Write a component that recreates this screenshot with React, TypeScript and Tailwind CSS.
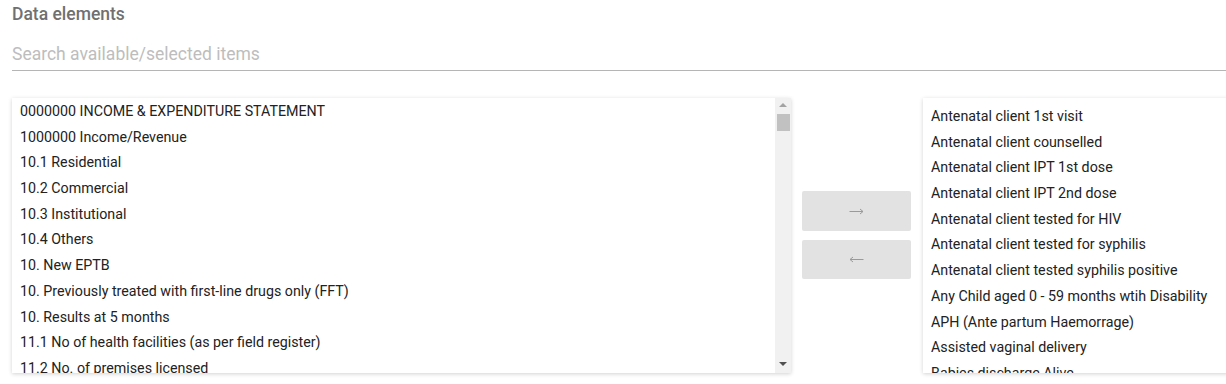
import React from 'react';

const available: string[] = [
    '0000000 INCOME & EXPENDITURE STATEMENT',
    '1000000 Income/Revenue',
    '10.1 Residential',
    '10.2 Commercial',
    '10.3 Institutional',
    '10.4 Others',
    '10. New EPTB',
    '10. Previously treated with first-line drugs only (FFT)',
    '10. Results at 5 months',
    '11.1 No of health facilities (as per field register)',
    '11.2 No. of premises licensed',
];

const selected: string[] = [
    'Antenatal client 1st visit',
    'Antenatal client counselled',
    'Antenatal client IPT 1st dose',
    'Antenatal client IPT 2nd dose',
    'Antenatal client tested for HIV',
    'Antenatal client tested for syphilis',
    'Antenatal client tested syphilis positive',
    'Any Child aged 0 - 59 months wtih Disability',
    'APH (Ante partum Haemorrage)',
    'Assisted vaginal delivery',
    'Babies discharge Alive',
];

const font = { fontFamily: 'Roboto, "Liberation Sans", sans-serif' };

const ListBox = ({ items, scrollbar, offset }: { items: string[]; scrollbar?: boolean; offset: string }) => (
    <div className="relative h-[275px] overflow-hidden bg-white shadow-[0_1px_4px_rgba(0,0,0,0.18)] flex">
        <ul className={`flex-1 ${offset}`}>
            {items.map((item) => (
                <li key={item} className="h-[25.7px] leading-[25.7px] px-2 text-[14.25px] text-[#222] whitespace-nowrap">
                    {item}
                </li>
            ))}
        </ul>
        {scrollbar && (
            <div className="w-[16px] shrink-0 bg-[#f1f1f1] flex flex-col items-center">
                <div className="mt-[5px] w-0 h-0 border-l-[4px] border-r-[4px] border-b-[4px] border-l-transparent border-r-transparent border-b-[#a3a3a3]" />
                <div className="mt-[7px] w-[13px] h-[17px] bg-[#c1c1c1]" />
                <div className="flex-1" />
                <div className="mb-[7px] w-0 h-0 border-l-[4px] border-r-[4px] border-t-[4px] border-l-transparent border-r-transparent border-t-[#505050]" />
            </div>
        )}
    </div>
);

const Arrow = ({ dir }: { dir: 'right' | 'left' }) => (
    <svg width="15" height="7" viewBox="0 0 15 7" className={dir === 'left' ? 'rotate-180' : ''}>
        <path d="M0.5 3.5H14M11 1L14 3.5L11 6" fill="none" stroke="#9a9a9a" strokeWidth="1" />
    </svg>
);

export default function App() {
    return (
        <div className="w-[1226px] h-[384px] overflow-hidden bg-white" style={font}>
            <div className="pl-[12px] pt-[3px]">
                <div className="text-[17.5px] font-medium text-[#707070] leading-[22px]">Data elements</div>
                <div className="mt-[16px] h-[30px] border-b border-[#b5b5b5] flex items-center">
                    <span className="text-[17.5px] text-[#bdbdbd] -mt-[2px]">Search available/selected items</span>
                </div>
            </div>

            <div className="flex mt-[27px] pl-[12px] w-[1600px]">
                <div className="w-[779px] shrink-0">
                    <ListBox items={available} scrollbar offset="pt-[1px]" />
                </div>
                <div className="w-[109px] shrink-0 ml-[11px] pt-[93px] flex flex-col gap-[9px]">
                    <button className="h-[40px] rounded-[2px] bg-[#e2e2e2] flex items-center justify-center">
                        <Arrow dir="right" />
                    </button>
                    <button className="h-[39px] rounded-[2px] bg-[#e2e2e2] flex items-center justify-center">
                        <Arrow dir="left" />
                    </button>
                </div>
                <div className="w-[779px] shrink-0 ml-[12px]">
                    <ListBox items={selected} offset="pt-[6px]" />
                </div>
            </div>
        </div>
    );
}
